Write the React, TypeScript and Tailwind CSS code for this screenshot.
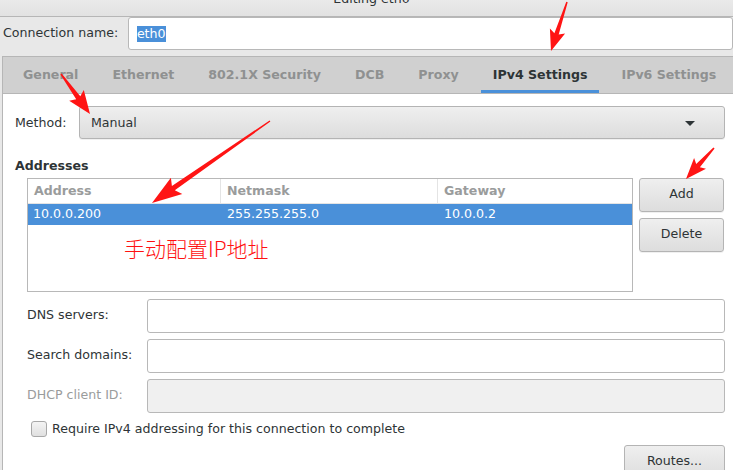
import React from "react";

type P = [number, number];

function arrowPoints(tail: P, tip: P, headLen: number, headHalf: number, w0: number, w1: number, notch: number): string {
  const dx = tip[0] - tail[0];
  const dy = tip[1] - tail[1];
  const len = Math.hypot(dx, dy);
  const d: P = [dx / len, dy / len];
  const n: P = [-d[1], d[0]];
  const B: P = [tip[0] - d[0] * headLen, tip[1] - d[1] * headLen];
  const W: P = [B[0] - d[0] * notch, B[1] - d[1] * notch];
  const pts: P[] = [
    [tail[0] + n[0] * w0 / 2, tail[1] + n[1] * w0 / 2],
    [B[0] + n[0] * w1 / 2, B[1] + n[1] * w1 / 2],
    [W[0] + n[0] * headHalf, W[1] + n[1] * headHalf],
    tip,
    [W[0] - n[0] * headHalf, W[1] - n[1] * headHalf],
    [B[0] - n[0] * w1 / 2, B[1] - n[1] * w1 / 2],
    [tail[0] - n[0] * w0 / 2, tail[1] - n[1] * w0 / 2],
  ];
  return pts.map((p) => `${p[0].toFixed(1)},${p[1].toFixed(1)}`).join(" ");
}

const tabs = ["General", "Ethernet", "802.1X Security", "DCB", "Proxy", "IPv4 Settings", "IPv6 Settings"];

function Btn({ children, className = "" }: { children: React.ReactNode; className?: string }) {
  return (
    <div
      className={`flex items-center justify-center rounded-[3px] border border-[#b4b4b4] bg-gradient-to-b from-[#efefef] to-[#dddddd] text-[#2e3436] shadow-[0_1px_0_rgba(0,0,0,0.06)] ${className}`}
    >
      {children}
    </div>
  );
}

function Entry({ disabled = false }: { disabled?: boolean }) {
  return (
    <div
      className={`h-[34px] flex-1 rounded-[3px] border border-[#b8b8b8] ${disabled ? "bg-[#f0f0f0]" : "bg-white"}`}
    />
  );
}

export default function App() {
  return (
    <div
      className="relative h-[470px] w-[733px] overflow-hidden bg-[#e8e8e8] text-[12.6px] text-[#2e3436]"
      style={{ fontFamily: '"DejaVu Sans", "Noto Sans CJK SC", sans-serif' }}
    >
      {/* title bar */}
      <div className="flex h-[17px] justify-center overflow-hidden border-b border-[#b6b6b6] bg-gradient-to-b from-[#eaeaea] to-[#e2e2e2]">
        <div className="-mt-[8px] ml-[10px] leading-[13px] text-[#2e3436]">Editing eth0</div>
      </div>

      {/* connection name */}
      <div className="flex h-[39px] items-start">
        <div className="ml-[3px] flex h-[33px] w-[128px] items-center">Connection name:</div>
        <div className="flex h-[33px] w-[620px] items-center rounded-[3px] border border-[#b8b8b8] bg-white pl-[8px]">
          <span className="bg-[#4a90d9] leading-[16px] text-white">eth0</span>
        </div>
      </div>

      {/* notebook */}
      <div className="ml-[2px] w-[740px] border-l border-t border-[#b6b6b6] bg-white">
        <div className="flex h-[37px] items-stretch gap-[10px] border-b border-[#b6b6b6] bg-[#d0d0d0] pl-[8px]">
          {tabs.map((t) => {
            const active = t === "IPv4 Settings";
            return (
              <div
                key={t}
                className={`flex items-center px-[12px] font-bold ${
                  active ? "border-b-[3px] border-[#4a90d9] pt-[3px] text-[#2e3436]" : "text-[#8f9191]"
                }`}
              >
                {t}
              </div>
            );
          })}
        </div>

        <div className="w-[731px] pl-[12px] pr-[9px] pt-[12px]">
          {/* method */}
          <div className="flex items-center">
            <div className="w-[64px] pt-[1px]">Method:</div>
            <Btn className="!justify-between h-[33px] flex-1 px-[11px] pt-[1px]">
              <span>Manual</span>
              <svg width="12" height="8" viewBox="0 0 12 8" className="mr-[17px]">
                <polygon points="1,2 11,2 6,7" fill="#2e3436" />
              </svg>
            </Btn>
          </div>

          {/* addresses */}
          <div className="mt-[18px] font-bold">Addresses</div>
          <div className="mt-[2px] flex gap-[6px] pl-[12px]">
            <div className="h-[114px] w-[606px] border border-[#b8b8b8] bg-white">
              <div className="flex h-[25px] border-b border-[#e4e4e4] font-bold text-[#9a9c9c]">
                <div className="w-[193px] border-r border-[#e4e4e4] pl-[6px] leading-[24px]">Address</div>
                <div className="w-[217px] border-r border-[#e4e4e4] pl-[6px] leading-[24px]">Netmask</div>
                <div className="flex-1 pl-[6px] leading-[24px]">Gateway</div>
              </div>
              <div className="flex h-[21px] items-center bg-[#4a90d9] pt-[1px] text-white">
                <div className="w-[193px] pl-[5px]">10.0.0.200</div>
                <div className="w-[217px] pl-[6px]">255.255.255.0</div>
                <div className="flex-1 pl-[6px]">10.0.0.2</div>
              </div>
              <div
                className="mt-[8px] pl-[96px] text-[21px] leading-[30px] text-[#ff1111]"
                style={{ fontFamily: '"Noto Sans CJK SC", sans-serif', fontWeight: 300 }}
              >
                手动配置IP地址
              </div>
            </div>
            <div className="flex w-[85px] flex-col gap-[6px]">
              <Btn className="h-[34px]">Add</Btn>
              <Btn className="h-[34px]">Delete</Btn>
            </div>
          </div>

          {/* form rows */}
          <div className="mt-[7px] flex flex-col gap-[6px] pl-[12px]">
            <div className="flex items-center">
              <div className="w-[120px]">DNS servers:</div>
              <Entry />
            </div>
            <div className="flex items-center">
              <div className="w-[120px]">Search domains:</div>
              <Entry />
            </div>
            <div className="flex items-center">
              <div className="w-[120px] text-[#9a9c9c]">DHCP client ID:</div>
              <Entry disabled />
            </div>
          </div>

          <div className="mt-[7px] flex items-center gap-[5px] pl-[16px]">
            <div className="h-[16px] w-[16px] rounded-[3px] border border-[#a8a8a8] bg-gradient-to-b from-[#f4f4f4] to-[#e0e0e0]" />
            <span>Require IPv4 addressing for this connection to complete</span>
          </div>

          <div className="mt-[6px] flex justify-end">
            <Btn className="h-[34px] w-[101px]">Routes...</Btn>
          </div>
        </div>
      </div>

      {/* annotation arrows */}
      <svg className="pointer-events-none absolute left-0 top-0" width="733" height="470" viewBox="0 0 733 470">
        <polygon points={arrowPoints([567, 2], [551, 51], 18, 8, 1.5, 4.5, 3)} fill="#ff1414" />
        <polygon points={arrowPoints([61, 74], [90, 114], 20, 9, 1.5, 5, 3)} fill="#ff1414" />
        <polygon points={arrowPoints([270, 121], [152, 203], 26, 10, 1.5, 5, 4)} fill="#ff1414" />
        <polygon points={arrowPoints([714, 148], [686, 179], 18, 8, 1.5, 5, 3)} fill="#ff1414" />
      </svg>
    </div>
  );
}
